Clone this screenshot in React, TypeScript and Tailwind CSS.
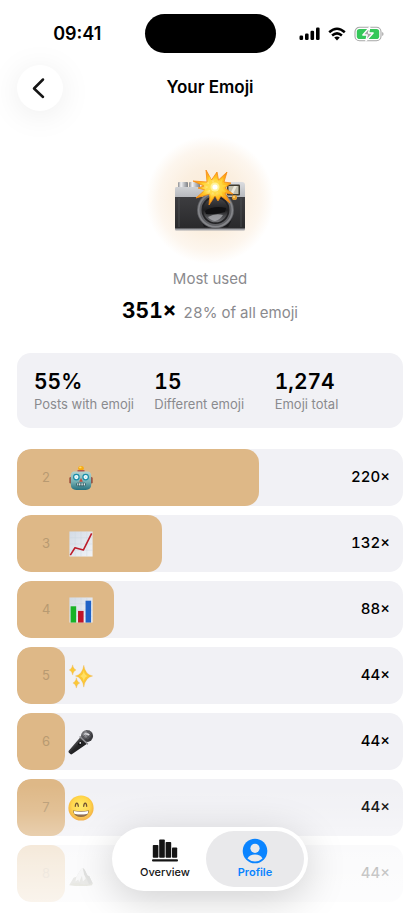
import React from "react";

type IconProps = { className?: string };

function CameraEmoji({ className }: IconProps) {
  return (
    <svg viewBox="0 0 72 62" className={className} role="img" aria-label="Camera with flash">
      <defs>
        <linearGradient id="camTop" x1="0" y1="0" x2="0" y2="1">
          <stop offset="0" stopColor="#dcdde0" />
          <stop offset="1" stopColor="#b4b6ba" />
        </linearGradient>
        <linearGradient id="camBody" x1="0" y1="0" x2="0" y2="1">
          <stop offset="0" stopColor="#3d3d40" />
          <stop offset="1" stopColor="#29292b" />
        </linearGradient>
        <linearGradient id="camKnob" x1="0" y1="0" x2="1" y2="0">
          <stop offset="0" stopColor="#8b8d91" />
          <stop offset="0.3" stopColor="#f2f2f4" />
          <stop offset="0.6" stopColor="#bcbec2" />
          <stop offset="1" stopColor="#7e8084" />
        </linearGradient>
        <linearGradient id="camGlass" x1="0" y1="0" x2="0" y2="1">
          <stop offset="0" stopColor="#47474b" />
          <stop offset="0.5" stopColor="#1d1d1f" />
          <stop offset="1" stopColor="#77787c" />
        </linearGradient>
        <radialGradient id="camFlash">
          <stop offset="0" stopColor="#ffffff" />
          <stop offset="0.2" stopColor="#fff3a0" />
          <stop offset="0.55" stopColor="#ffc928" />
          <stop offset="1" stopColor="#fb9210" />
        </radialGradient>
      </defs>
      <rect x="4" y="13" width="10" height="7" rx="1" fill="url(#camKnob)" />
      <rect x="15" y="13" width="11" height="7" rx="1" fill="url(#camKnob)" />
      <path d="M2 18h24l5-5h37q3 0 3 3v13H1V20q0-2 1-2z" fill="url(#camTop)" />
      <path d="M1 28h70v31q0 1-1 1H2q-1 0-1-1z" fill="url(#camBody)" />
      <path d="M5 29v29M67 29v29" stroke="#55565a" strokeWidth="0.7" />
      <rect x="1" y="59.500" width="70" height="2" rx="1" fill="#a5a6aa" />
      <path d="M27 33q-3 12 3 25h24q7-10 4-25z" fill="#19191b" />
      <circle cx="41.500" cy="41" r="18.500" fill="#606165" />
      <circle cx="41.500" cy="41" r="16.800" fill="none" stroke="#85868a" strokeWidth="1.600" />
      <circle cx="41.500" cy="41" r="14" fill="#222224" />
      <circle cx="41.500" cy="41" r="12.300" fill="url(#camGlass)" />
      <path d="M31 42q9-6 21-3l-1 4q-10 3-19 2z" fill="#111113" />
      <path d="M34 48q7-4 15-2-3 5-8 6-5-1-7-4z" fill="#b0b1b5" opacity="0.75" />
      <rect x="53" y="15.500" width="13" height="11" rx="1" fill="#3e3b30" />
      <rect x="54.500" y="17" width="10" height="8" fill="#c2bfae" />
      <path d="M56 25l4-8h3l-4 8z" fill="#ebe8db" />
      <circle cx="60.500" cy="28.500" r="2.600" fill="#e19c2e" />
      <circle cx="60" cy="28" r="1" fill="#ffd978" />
      <path
        d="M32 1l5.500 10L43 3l1.500 8L53 3l-3 10 7 1-6 5 8 6-8-1 5 10-9-7-3 5-3-5-6 9 1-11-14 4 9-8-7-2 6-2-11-5 14 1z"
        fill="url(#camFlash)"
        stroke="#f78b12"
        strokeWidth="0.8"
      />
      <path d="M35 7l4 7 3-5 2 5 5-5-2 7 6 0-5 3 4 4-5-1 2 6-6-5-2 4-2-4-4 5 1-7-8 2 6-5-7-4 8 1z" fill="#ffd83d" opacity="0.8" />
      <circle cx="41" cy="18" r="4.500" fill="#fff29a" />
      <circle cx="41" cy="18" r="2.600" fill="#fff" />
    </svg>
  );
}

function RobotEmoji({ className }: IconProps) {
  return (
    <svg viewBox="0 0 26 28" className={className} role="img" aria-label="Robot">
      <defs>
        <linearGradient id="robotFace" x1="0" y1="0" x2="0" y2="1">
          <stop offset="0" stopColor="#b5d3d0" />
          <stop offset="0.55" stopColor="#76b0b3" />
          <stop offset="1" stopColor="#236f7d" />
        </linearGradient>
      </defs>
      <rect x="0.500" y="13" width="4" height="7" rx="1.500" fill="#963f30" />
      <rect x="21.500" y="13" width="4" height="7" rx="1.500" fill="#963f30" />
      <rect x="11.500" y="4" width="3" height="3.500" fill="#83593a" />
      <ellipse cx="13" cy="3.500" rx="3" ry="2.500" fill="#f7a913" />
      <ellipse cx="12.300" cy="2.600" rx="1.300" ry="0.900" fill="#ffdf68" />
      <rect x="9" y="5.500" width="8" height="2" rx="1" fill="#b5574e" />
      <path d="M6 7h14q4 0 4 5v9q0 5.500-6 6h-10q-6-.5-6-6V12q0-5 4-5z" fill="url(#robotFace)" />
      <circle cx="8" cy="13" r="3.600" fill="#188ca8" />
      <circle cx="18" cy="13" r="3.600" fill="#188ca8" />
      <circle cx="8" cy="13" r="2.300" fill="#f3ffff" />
      <circle cx="18" cy="13" r="2.300" fill="#f3ffff" />
      <circle cx="8" cy="13" r="0.900" fill="#ccdcdd" />
      <circle cx="18" cy="13" r="0.900" fill="#ccdcdd" />
      <path d="M13 14l2 4h-4z" fill="#c84b3b" />
      <rect x="8" y="19" width="10" height="3.800" rx="1.500" fill="#244f58" />
      <path d="M9.500 19.600v2.600M11.300 19.600v2.600M13.100 19.600v2.600M14.900 19.600v2.600M16.700 19.600v2.600" stroke="#e3f2f1" strokeWidth="1.100" />
    </svg>
  );
}

function Paper() {
  return (
    <>
      <defs>
        <linearGradient id="paperFill" x1="0" y1="0" x2="1" y2="1">
          <stop offset="0" stopColor="#d3dbe6" />
          <stop offset="1" stopColor="#f1f3f7" />
        </linearGradient>
      </defs>
      <rect x="0.500" y="0.500" width="25" height="27" fill="url(#paperFill)" />
      <path d="M.5 7.300h25M.5 14h25M.5 20.700h25M6.700.5v27M13 .5v27M19.300.5v27" stroke="#c9d3df" strokeWidth="0.400" />
    </>
  );
}

function TrendEmoji({ className }: IconProps) {
  return (
    <svg viewBox="0 0 26 28" className={className} role="img" aria-label="Chart increasing">
      <Paper />
      <path d="M1.500 26L6.500 18L15.500 20.500L24.500 2.500" fill="none" stroke="#bd1c2b" strokeWidth="1.700" strokeLinejoin="round" />
    </svg>
  );
}

function BarsEmoji({ className }: IconProps) {
  return (
    <svg viewBox="0 0 26 28" className={className} role="img" aria-label="Bar chart">
      <Paper />
      <rect x="1.800" y="10" width="6" height="17.500" fill="#18b326" />
      <rect x="9.800" y="15" width="6" height="12.500" fill="#c01428" />
      <rect x="17.900" y="4" width="6" height="23.500" fill="#1f62c6" />
    </svg>
  );
}

function SparklesEmoji({ className }: IconProps) {
  return (
    <svg viewBox="0 0 26 28" className={className} role="img" aria-label="Sparkles">
      <g fill="#fbc836" stroke="#eda93d" strokeWidth="0.300">
        <path d="M16 2.500q1.500 10 9.500 11.500Q17.500 15.500 16 26 14.500 15.500 7 14 14.500 12.500 16 2.500z" />
        <path d="M4 2q.6 4.500 3.700 5.500Q4.600 8.500 4 13 3.400 8.500.3 7.500 3.400 6.500 4 2z" />
        <path d="M8 16q.6 4.500 3.700 5.500Q8.600 22.500 8 27 7.400 22.500 4.300 21.500 7.400 20.500 8 16z" />
      </g>
      <path d="M16 8q.7 5.200 4.300 6-3.600.8-4.300 6-.7-5.200-4.300-6 3.600-.8 4.300-6z" fill="#ffe065" />
    </svg>
  );
}

function MicEmoji({ className }: IconProps) {
  return (
    <svg viewBox="0 0 28 28" className={className} role="img" aria-label="Microphone">
      <defs>
        <linearGradient id="micHandle" x1="0" y1="0" x2="1" y2="1">
          <stop offset="0.300" stopColor="#58585b" />
          <stop offset="0.500" stopColor="#252527" />
          <stop offset="1" stopColor="#151517" />
        </linearGradient>
        <radialGradient id="micHead" cx="0.400" cy="0.350">
          <stop offset="0" stopColor="#b4b4b8" />
          <stop offset="0.550" stopColor="#727277" />
          <stop offset="1" stopColor="#3b3b3f" />
        </radialGradient>
      </defs>
      <path d="M13.500 8.500l7 7.500L4.500 27q-1 .7-2 0L.8 25.300q-.7-.9 0-2z" fill="url(#micHandle)" />
      <circle cx="20.500" cy="7.500" r="6.500" fill="url(#micHead)" />
      <path d="M13 8.500l8 7.500" stroke="#8b8b90" strokeWidth="1.600" strokeLinecap="round" />
      <path d="M16.500 3.500l8.500 8M19.500 1.500l7 6.500M15 7l7 6.500M16 9l7-7.500M18.500 12l7.500-8M21.500 13.500l5.500-6" stroke="#36363b" strokeWidth="0.450" />
      <path d="M17.500 5.500q3-1 5.500 1" stroke="#e3e3e7" strokeWidth="1.300" fill="none" />
      <ellipse cx="12.800" cy="15.500" rx="2.300" ry="1.600" transform="rotate(-42 12.800 15.500)" fill="#0f0f11" />
      <circle cx="13.200" cy="15" r="1" fill="#ededf0" />
    </svg>
  );
}

function GrinEmoji({ className }: IconProps) {
  return (
    <svg viewBox="0 0 26 26" className={className} role="img" aria-label="Grinning face">
      <defs>
        <radialGradient id="grinFace" cx="0.500" cy="0.400" r="0.600">
          <stop offset="0" stopColor="#ffe95d" />
          <stop offset="0.600" stopColor="#ffd23c" />
          <stop offset="1" stopColor="#f09d22" />
        </radialGradient>
      </defs>
      <circle cx="13" cy="13" r="12.600" fill="url(#grinFace)" />
      <path d="M7.300 11.300q.2-3.200 1.500-3.200t1.500 3.200M15.700 11.300q.2-3.200 1.500-3.200t1.500 3.200" fill="none" stroke="#62401c" strokeWidth="1.300" strokeLinecap="round" />
      <path d="M5 15.500q8 1.400 16 0-.5 6.500-8 6.500t-8-6.500z" fill="#67401c" />
      <path d="M5.700 16.100q7.300 1.200 14.600 0-.2 2-.9 2.800-6.400 1.100-12.800 0-.7-.8-.9-2.800z" fill="#fff" />
      <path d="M8 20q5 .7 10 0-2 1.500-5 1.500t-5-1.500z" fill="#8c5c30" />
    </svg>
  );
}

function MountainEmoji({ className }: IconProps) {
  return (
    <svg viewBox="0 0 26 28" className={className} role="img" aria-label="Mountain">
      <path d="M.5 25.500L5 18l3-1 5-8 2-1.500 2 2 3 6 2 1 3.500 7.500-1 1.500-12 1z" fill="#96968c" />
      <path d="M15 7.500l-2 1.500-5 8-1 5 3-2 1 3 3-7 1 6 3-3-1-5z" fill="#dedfe0" />
      <path d="M15 7.500l2 2 3 6 2 1 3.500 7.500-4 1-3-7-2-3z" fill="#757872" />
      <path d="M.5 25.500q6-3 12-1t13-.5l-.5 2q-12 2-24.500 0z" fill="#8c8c72" />
    </svg>
  );
}

function SignalIcon() {
  return (
    <svg viewBox="0 0 21 14" className="h-3.5 w-[21px]" aria-hidden="true">
      <rect x="0.500" y="8.500" width="3.600" height="4.500" rx="1.200" />
      <rect x="6" y="6.500" width="3.600" height="6.500" rx="1.200" />
      <rect x="11.500" y="3.700" width="3.600" height="9.300" rx="1.200" />
      <rect x="17" y="0.500" width="3.600" height="12.500" rx="1.200" />
    </svg>
  );
}

function WifiIcon() {
  return (
    <svg viewBox="0 0 18 14" className="h-3.5 w-[18px]" aria-hidden="true">
      <path d="M1.200 5.200q7.800-7 15.600 0M4.100 8.500q4.900-4.300 9.800 0" fill="none" stroke="black" strokeWidth="2.500" />
      <path d="M6.200 10.600q2.800-2.200 5.600 0L9 13.400z" />
    </svg>
  );
}

function BatteryIcon() {
  return (
    <svg viewBox="0 0 30 16" className="h-4 w-[30px]" aria-hidden="true">
      <rect x="1" y="1.200" width="26" height="13.600" rx="4.500" fill="white" stroke="#a6a6a6" strokeWidth="1.100" />
      <rect x="2.800" y="3" width="22.400" height="10" rx="2.800" fill="#34c759" />
      <path d="M28.200 6q1.300.4 1.300 2t-1.300 2z" fill="#a6a6a6" />
      <path d="M15.800 1L8.800 9h4.400L11.800 15l7.400-8h-4.600z" fill="#a6a6a6" stroke="white" strokeWidth="1.300" strokeLinejoin="round" />
    </svg>
  );
}

function OverviewIcon() {
  return (
    <svg viewBox="0 0 26 24" className="h-6 w-[26px]" aria-hidden="true">
      <g fill="#151515">
        <rect x="0.800" y="7" width="5.600" height="12.700" rx="0.800" />
        <rect x="7.200" y="1.500" width="5.600" height="18.200" rx="0.800" />
        <rect x="13.600" y="4" width="5.600" height="15.700" rx="0.800" />
        <rect x="20" y="9.500" width="5.200" height="10.200" rx="0.800" />
        <rect x="0" y="21.300" width="26" height="2.200" rx="1" />
      </g>
    </svg>
  );
}

function ProfileIcon() {
  return (
    <svg viewBox="0 0 26 26" className="size-[26px]" aria-hidden="true">
      <circle cx="13" cy="13" r="12.300" fill="#0a84ff" />
      <circle cx="13" cy="10.300" r="4.600" fill="#e9e9eb" />
      <path d="M5.500 20.600q2-4.100 7.500-4.100t7.500 4.100q-3 2.900-7.500 2.900t-7.500-2.900z" fill="#e9e9eb" />
    </svg>
  );
}

const TOP_COUNT = 351;

const stats = [
  { value: "55%", label: "Posts with emoji" },
  { value: "15", label: "Different emoji" },
  { value: "1,274", label: "Emoji total" },
];

const ranking = [
  { rank: 2, count: 220, Icon: RobotEmoji },
  { rank: 3, count: 132, Icon: TrendEmoji },
  { rank: 4, count: 88, Icon: BarsEmoji },
  { rank: 5, count: 44, Icon: SparklesEmoji },
  { rank: 6, count: 44, Icon: MicEmoji },
  { rank: 7, count: 44, Icon: GrinEmoji },
  { rank: 8, count: 44, Icon: MountainEmoji },
];

export default function App() {
  return (
    <div className="relative flex h-screen flex-col overflow-hidden bg-white font-['Inter',sans-serif] text-black">
      <div className="grid shrink-0 grid-cols-[minmax(0,1fr)_auto_minmax(0,1fr)] items-center pt-3.5">
        <span className="pl-2.5 text-center text-lg font-semibold">09:41</span>
        <div className="h-[39px] w-[131px] rounded-full bg-black" />
        <div className="flex items-center justify-end gap-2 pr-9">
          <SignalIcon />
          <WifiIcon />
          <BatteryIcon />
        </div>
      </div>

      <header className="grid shrink-0 grid-cols-[46px_1fr_46px] items-center px-[17px] pt-3">
        <button
          type="button"
          aria-label="Back"
          className="flex size-[46px] items-center justify-center rounded-full bg-white shadow-[0_4px_32px_rgba(0,0,0,0.08)]"
        >
          <svg viewBox="0 0 14 22" className="mr-1 h-[22px] w-3.5" aria-hidden="true">
            <path d="M12 2.500L3 11.500l9 8.500" fill="none" stroke="#151515" strokeWidth="2.500" strokeLinecap="round" strokeLinejoin="round" />
          </svg>
        </button>
        <h1 className="text-center text-[17px] font-semibold">Your Emoji</h1>
      </header>

      <main className="min-h-0 flex-1 overflow-hidden px-[17px]">
        <section className="flex flex-col items-center pt-[25px]">
          <div className="flex size-32 items-center justify-center rounded-full bg-[radial-gradient(closest-side,#faead6_0%,#fbefe0_50%,#fdf6ee_80%,#ffffff_100%)]">
            <CameraEmoji className="h-[62px] w-[72px]" />
          </div>
          <p className="pt-[3px] text-[15px] leading-6 text-[#8a8a8e]">Most used</p>
          <p className="flex items-baseline gap-[7px] pt-1.5 leading-7 tabular-nums">
            <strong className="text-[21px] font-bold">351×</strong>
            <span className="text-[15px] text-[#8a8a8e]">28% of all emoji</span>
          </p>
        </section>

        <dl className="mt-[26px] grid grid-cols-3 rounded-[14px] bg-[#f1f1f5] pt-4 pr-2 pb-[15px] pl-[17px]">
          {stats.map((s) => (
            <div key={s.label} className="flex flex-col-reverse whitespace-nowrap">
              <dt className="text-[13px] leading-[18px] text-[#8a8a8e]">{s.label}</dt>
              <dd className="text-[21px] leading-[26px] font-semibold tabular-nums">{s.value}</dd>
            </div>
          ))}
        </dl>

        <ol className="mt-[21px] flex flex-col gap-[9px]">
          {ranking.map(({ rank, count, Icon }) => (
            <li
              key={rank}
              className={`relative flex h-[57px] items-center overflow-hidden rounded-[14px] bg-[#f1f1f5] pr-[13px] pl-[25px] ${rank > 7 ? "opacity-50" : ""}`}
            >
              <div
                className="absolute inset-y-0 left-0 rounded-[14px] bg-[#deb887]"
                style={{ width: `${(count / TOP_COUNT) * 100}%` }}
              />
              <span className="relative w-2 text-center text-[13px] text-[#b89a71]">{rank}</span>
              <Icon className="relative ml-[17px] h-[26px] w-7" />
              <span className="relative ml-auto text-[15px] font-medium tabular-nums">{count}×</span>
            </li>
          ))}
        </ol>
      </main>

      <div className="pointer-events-none absolute inset-x-0 bottom-0 h-32 bg-[linear-gradient(to_bottom,rgba(255,255,255,0)_0%,rgba(255,255,255,0.12)_20%,rgba(255,255,255,0.35)_42%,rgba(255,255,255,0.5)_60%,rgba(255,255,255,0.75)_100%)]" />

      <nav className="absolute bottom-[22px] left-1/2 flex h-16 w-[196px] -translate-x-1/2 rounded-full bg-white p-1 shadow-[0_8px_40px_rgba(0,0,0,0.18)]">
        <a href="#overview" className="flex flex-1 flex-col items-center justify-center gap-0.5 pl-2 text-[11px] leading-4 font-medium text-[#151515]">
          <OverviewIcon />
          Overview
        </a>
        <a
          href="#profile"
          aria-current="page"
          className="flex w-[98px] flex-col items-center justify-center rounded-full bg-[#e9e9eb] text-[11px] leading-4 font-semibold text-[#0a84ff]"
        >
          <ProfileIcon />
          Profile
        </a>
      </nav>
    </div>
  );
}
